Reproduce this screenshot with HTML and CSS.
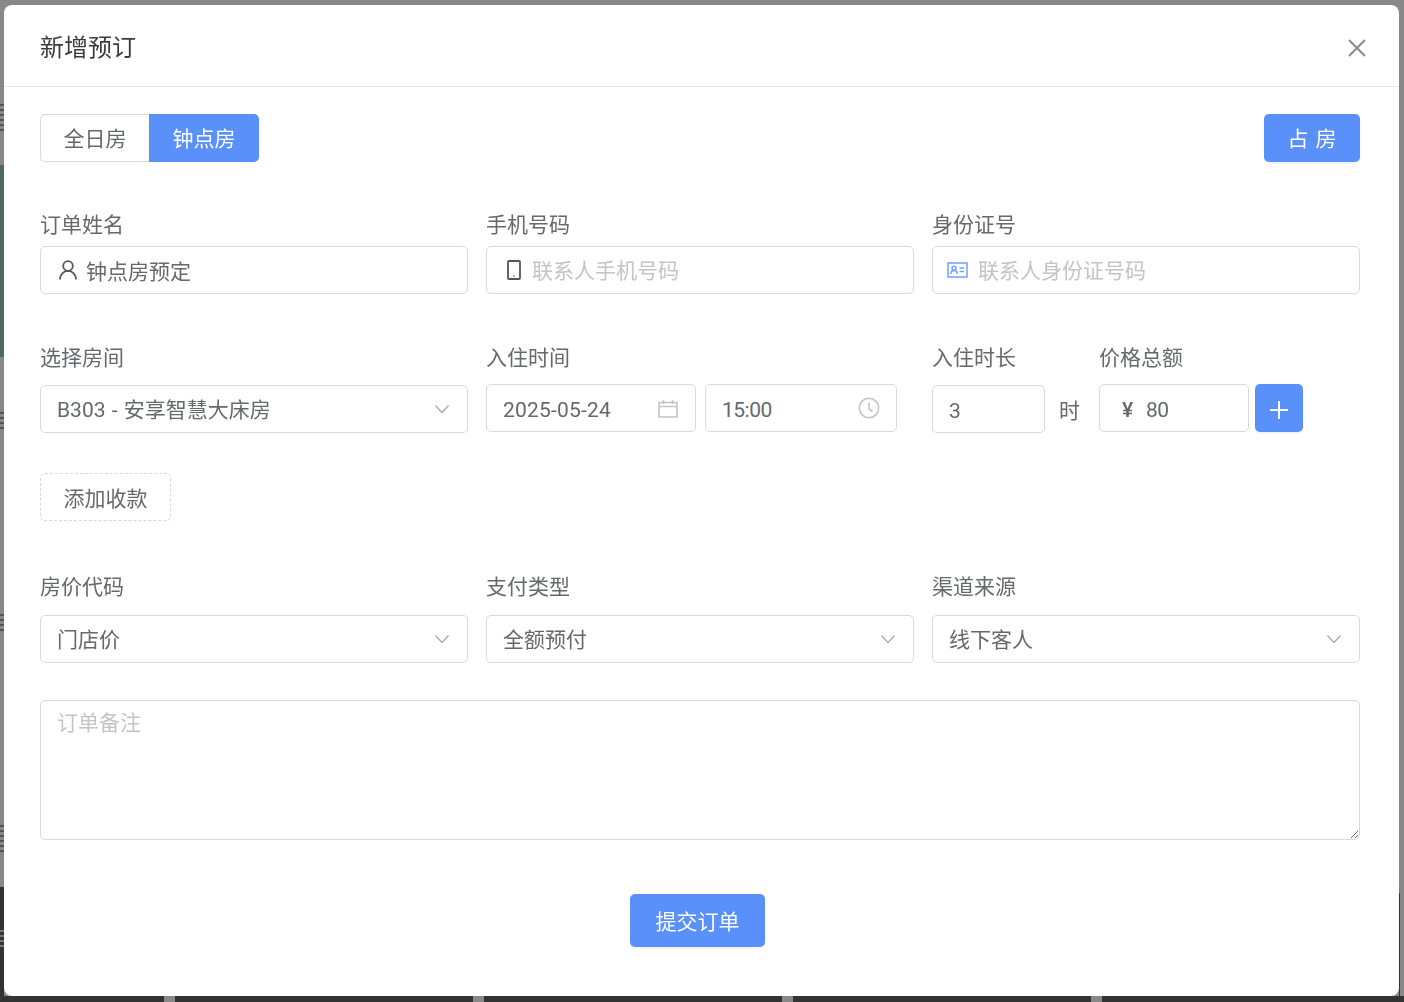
FILE: index.html
```html
<!DOCTYPE html>
<html lang="zh-CN">
<head>
  <meta charset="UTF-8" />
  <title>新增预订</title>
  <link rel="stylesheet" href="styles.css">
</head>
<body>

<!-- page behind the dialog, only the edges show -->
<div class="backdrop">
  <div class="bd-green"></div>
  <div class="bd-dark-left"></div>
  <div class="bd-dark-right"></div>
  <div class="bd-bottom"></div>
  <i class="bd-gap gap1"></i><i class="bd-gap gap2"></i><i class="bd-gap gap3"></i><i class="bd-gap gap4"></i>
  <i class="bd-mark mark1"></i><i class="bd-mark mark2"></i><i class="bd-mark mark3"></i><i class="bd-mark mark4"></i>
  <i class="bd-mark mark5"></i>
</div>

<div class="modal">
  <div class="modal-header">
    <div class="modal-title">新增预订</div>
    <svg class="icon-close" viewBox="0 0 18 18"><path d="M1 1L17 17M17 1L1 17"/></svg>
  </div>

  <div class="modal-body">
    <div class="top-bar">
      <div class="segment">
        <button class="seg-btn">全日房</button>
        <button class="seg-btn active">钟点房</button>
      </div>
      <button class="btn-primary btn-occupy">占 房</button>
    </div>

    <div class="row row-contact">
      <div class="field">
        <label>订单姓名</label>
        <div class="control">
          <svg class="icon icon-user" viewBox="0 0 18 20"><circle cx="9" cy="6" r="4.8"/><path d="M1 19.500c0-5 3.500-8.700 8-8.700s8 3.700 8 8.700"/></svg>
          <input type="text" value="钟点房预定">
        </div>
      </div>
      <div class="field">
        <label>手机号码</label>
        <div class="control">
          <svg class="icon icon-phone" viewBox="0 0 14 20"><rect x="1" y="1" width="12" height="18" rx="1"/><circle class="dot" cx="7" cy="16" r=".8"/></svg>
          <input class="empty" type="text" placeholder="联系人手机号码">
        </div>
      </div>
      <div class="field">
        <label>身份证号</label>
        <div class="control">
          <svg class="icon icon-card" viewBox="0 0 21 16"><rect x="1" y="1" width="19" height="14"/><circle cx="7" cy="6.2" r="2"/><path d="M3.8 12c0-2.2 1.4-3.4 3.2-3.4s3.2 1.2 3.2 3.4M12.5 6h4.5M12.5 9.500h4.500"/></svg>
          <input class="empty" type="text" placeholder="联系人身份证号码">
        </div>
      </div>
    </div>

    <div class="row row-stay">
      <div class="field">
        <label>选择房间</label>
        <div class="control select">
          <span class="value room-name">B303 - 安享智慧大床房</span>
          <svg class="chevron" viewBox="0 0 14 10"><path d="M.5 1.500L7 8.500l6.500-7"/></svg>
        </div>
      </div>
      <div class="field field-tight">
        <label>入住时间</label>
        <div class="datetime">
          <div class="control picker picker-date">
            <span class="value num date-num">2025-05-24</span>
            <svg class="icon-calendar" viewBox="0 0 20 19"><path d="M1 3.500h18v14.500H1zM1 7.500h18M5.500 1v4M14.500 1v4"/></svg>
          </div>
          <div class="control picker picker-time">
            <span class="value num time-num">15:00</span>
            <svg class="icon-clock" viewBox="0 0 22 22"><circle cx="11" cy="11" r="9.700"/><path d="M11 5.500V12l3.500 2.500"/></svg>
          </div>
        </div>
      </div>
      <div class="stay-extra">
        <div class="field field-hours">
          <label>入住时长</label>
          <div class="hours">
            <div class="control hours-box"><span class="value num">3</span></div>
            <span class="unit">时</span>
          </div>
        </div>
        <div class="field field-tight">
          <label>价格总额</label>
          <div class="price">
            <div class="control price-box"><span class="yen num">¥</span><span class="value num time-num">80</span></div>
            <button class="btn-primary btn-plus"><svg viewBox="0 0 18 18"><path d="M9 0V18M0 9H18"/></svg></button>
          </div>
        </div>
      </div>
    </div>

    <button class="btn-dashed">添加收款</button>

    <div class="row row-pay">
      <div class="field">
        <label>房价代码</label>
        <div class="control select">
          <span class="value">门店价</span>
          <svg class="chevron" viewBox="0 0 14 10"><path d="M.5 1.500L7 8.500l6.500-7"/></svg>
        </div>
      </div>
      <div class="field">
        <label>支付类型</label>
        <div class="control select">
          <span class="value">全额预付</span>
          <svg class="chevron" viewBox="0 0 14 10"><path d="M.5 1.500L7 8.500l6.500-7"/></svg>
        </div>
      </div>
      <div class="field">
        <label>渠道来源</label>
        <div class="control select">
          <span class="value">线下客人</span>
          <svg class="chevron" viewBox="0 0 14 10"><path d="M.5 1.500L7 8.500l6.500-7"/></svg>
        </div>
      </div>
    </div>

    <textarea class="remark" placeholder="订单备注"></textarea>

    <div class="footer">
      <button class="btn-primary btn-submit">提交订单</button>
    </div>
  </div>
</div>

</body>
</html>
```

FILE: styles.css
```css
* {
  box-sizing: border-box;
}

html, body {
  height: 100%;
}

body {
  margin: 0;
  background: #888;
  font-family: Roboto, "Noto Sans CJK SC", sans-serif;
  color: #66686c;
  overflow: hidden;
}

/* ---- backdrop ---- */
.backdrop {
  position: fixed;
  inset: 0;
}

.bd-green {
  position: absolute;
  left: 0;
  top: 165px;
  width: 4px;
  height: 192px;
  background: #4c6b5c;
}

.bd-dark-left {
  position: absolute;
  left: 0;
  top: 887px;
  bottom: 0;
  width: 4px;
  background: #333;
}

.bd-dark-right {
  position: absolute;
  left: 1399px;
  top: 893px;
  bottom: 0;
  width: 1px;
  background: #333;
}

.bd-bottom {
  position: absolute;
  left: 0;
  right: 0;
  top: 996px;
  bottom: 0;
  background: #333;
}

.bd-gap {
  position: absolute;
  top: 996px;
  bottom: 0;
  width: 11px;
  background: #888;
}

.gap1 { left: 164px; }
.gap2 { left: 473px; }
.gap3 { left: 782px; }
.gap4 { left: 1091px; }

.bd-mark {
  position: absolute;
  left: 0;
  width: 4px;
  background: repeating-linear-gradient(#555 0, #555 2px, transparent 2px, transparent 5px);
}

.mark1 { top: 104px; height: 29px; }
.mark2 { top: 412px; height: 19px; }
.mark3 { top: 614px; height: 18px; }
.mark4 { top: 825px; height: 29px; }
.mark5 { top: 930px; height: 20px; background: repeating-linear-gradient(#777 0, #777 2px, transparent 2px, transparent 5px); }

/* ---- dialog ---- */
.modal {
  position: fixed;
  left: 4px;
  top: 5px;
  width: 1395px;
  height: 991px;
  background: #fff;
  border-radius: 8px;
}

.modal-header {
  height: 82px;
  padding: 0 33px 0 36px;
  border-bottom: 1px solid #e8e8e8;
  display: flex;
  align-items: center;
  justify-content: space-between;
}

.modal-title {
  font-size: 24px;
  line-height: 84px;
  margin-top: 4px;
  color: #3a3c40;
}

.icon-close {
  width: 18px;
  height: 18px;
  margin-top: 5px;
  fill: none;
  stroke: #8a8a8a;
  stroke-width: 2;
}

.modal-body {
  padding: 27px 39px 0 36px;
}

/* ---- buttons ---- */
button {
  font-family: inherit;
  cursor: pointer;
}

.btn-primary {
  border: none;
  border-radius: 5px;
  background: #5a90f9;
  color: #fff;
  font-size: 21px;
  padding: 0 0 2px;
  box-shadow: 0 2px 0 rgba(0, 0, 0, 0.045);
}

.top-bar {
  display: flex;
  justify-content: space-between;
}

.segment {
  display: flex;
  height: 48px;
}

.seg-btn {
  padding: 0 0 2px;
  font-size: 21px;
  color: #66686c;
  background: #fff;
  border: 1px solid #d9d9d9;
  border-right: none;
  border-radius: 5px 0 0 5px;
  width: 109px;
}

.seg-btn.active {
  width: 110px;
  color: #fff;
  background: #5a90f9;
  border: none;
  border-radius: 0 5px 5px 0;
}

.btn-occupy {
  width: 96px;
  height: 48px;
  word-spacing: 2px;
}

/* ---- form rows ---- */
.row {
  display: grid;
  grid-template-columns: repeat(3, 428px);
  column-gap: 18px;
}

.row-contact {
  margin-top: 48px;
}

.row-stay {
  margin-top: 49px;
}

.row-pay {
  margin-top: 51px;
}

.field label {
  display: block;
  font-size: 21px;
  line-height: 30px;
  margin-bottom: 12px;
}

.row-contact .field label {
  margin-bottom: 6px;
}

.row-pay .field label {
  margin-bottom: 13px;
}

.field-tight label {
  margin-bottom: 11px !important;
}

.control {
  display: flex;
  align-items: center;
  height: 48px;
  background: #fff;
  border: 1px solid #d9d9d9;
  border-radius: 5px;
  font-size: 21px;
  color: #66686c;
}

.control input {
  flex: 1;
  min-width: 0;
  border: none;
  outline: none;
  padding: 0;
  font-family: inherit;
  font-size: 21px;
  color: #66686c;
  background: transparent;
}

.control input.empty {
  padding-top: 2px;
}

input::placeholder,
textarea::placeholder {
  color: #c4c4c4;
  opacity: 1;
}

/* ---- input prefix icons ---- */
.icon {
  flex: none;
  fill: none;
}

.icon-user {
  width: 18px;
  height: 20px;
  margin: 0 9px 0 18px;
  stroke: #555;
  stroke-width: 1.8;
}

.icon-phone {
  width: 14px;
  height: 20px;
  margin: 0 11px 0 20px;
  stroke: #555;
  stroke-width: 1.8;
}

.icon-phone .dot {
  fill: #555;
  stroke: none;
}

.icon-card {
  width: 21px;
  height: 16px;
  margin: 0 10px 0 14px;
  stroke: #6ea1fb;
  stroke-width: 1.5;
}

/* ---- select ---- */
.select,
.picker,
.hours-box {
  padding: 0 17px 0 16px;
  justify-content: space-between;
}

.value {
  padding-bottom: 2px;
}

.room-name {
  word-spacing: 1px;
}

.value.num {
  padding: 3px 0 0;
}

.date-num {
  letter-spacing: 0.2px;
}

.time-num {
  letter-spacing: -0.5px;
}

.chevron {
  width: 14px;
  height: 10px;
  margin-right: 1px;
  fill: none;
  stroke: #a8a8a8;
  stroke-width: 1.3;
}

/* ---- date + time ---- */
.datetime {
  display: flex;
  gap: 9px;
}

.picker-date {
  width: 210px;
}

.picker-time {
  width: 192px;
}

.picker {
  padding-right: 16px;
}

.icon-calendar {
  width: 20px;
  height: 19px;
  margin-right: 1px;
  fill: none;
  stroke: #c4c4c4;
  stroke-width: 1.6;
}

.icon-clock {
  width: 22px;
  height: 22px;
  fill: none;
  stroke: #c4c4c4;
  stroke-width: 1.6;
}

/* ---- hours + price ---- */
.stay-extra {
  display: flex;
}

.field-hours {
  width: 167px;
}

.hours {
  display: flex;
  align-items: center;
}

.hours-box {
  width: 113px;
}

.unit {
  margin-left: 14px;
  font-size: 21px;
}

.price {
  display: flex;
  gap: 6px;
}

.price-box {
  width: 150px;
  padding-left: 22px;
}

.yen {
  width: 24px;
  font-size: 21px;
  font-weight: 500;
  padding-top: 3px;
}

.btn-plus {
  width: 48px;
  height: 48px;
  padding: 0;
  display: flex;
  align-items: center;
  justify-content: center;
}

.btn-plus svg {
  width: 18px;
  height: 18px;
  fill: none;
  stroke: #fff;
  stroke-width: 2;
  margin-top: 4px;
}

/* ---- the rest ---- */
.btn-dashed {
  display: block;
  width: 131px;
  height: 48px;
  margin-top: 40px;
  padding: 0 0 1px;
  font-size: 21px;
  color: #66686c;
  background: #fff;
  border: 1px dashed #d9d9d9;
  border-radius: 5px;
  box-shadow: 0 2px 0 rgba(0, 0, 0, 0.015);
}

.remark {
  display: block;
  width: 1320px;
  height: 140px;
  margin-top: 37px;
  padding: 5px 16px;
  font-family: inherit;
  font-size: 21px;
  color: #66686c;
  border: 1px solid #d9d9d9;
  border-radius: 5px;
  outline: none;
}

.footer {
  display: flex;
  justify-content: center;
  margin-top: 54px;
  padding-right: 5px;
}

.btn-submit {
  width: 135px;
  height: 53px;
}
```
